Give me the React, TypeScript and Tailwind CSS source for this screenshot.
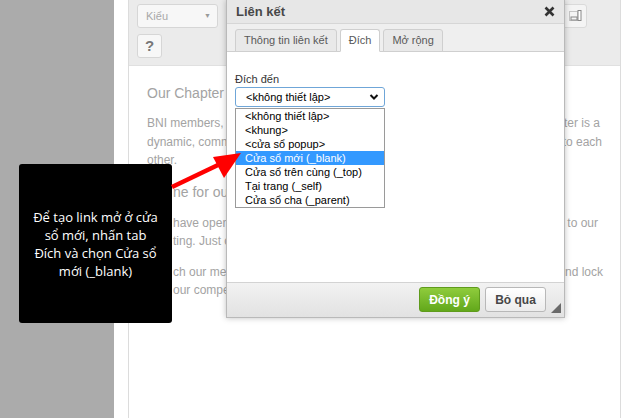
import { useState } from 'react'

const options = [
    '<không thiết lập>',
    '<khung>',
    '<cửa sổ popup>',
    'Cửa sổ mới (_blank)',
    'Cửa sổ trên cùng (_top)',
    'Tại trang (_self)',
    'Cửa sổ cha (_parent)',
]

// page text: only the bits that peek out around the dialog and the callout
const Line = ({ left, right = '', pr = 'pr-[20px]', indent = false }: { left: string; right?: string; pr?: string; indent?: boolean }) => (
    <div className={`flex justify-between whitespace-nowrap ${pr}`}>
        <span className={indent ? 'ml-[26px]' : ''}>{left}</span>
        <span>{right}</span>
    </div>
)

const App = () => {
    const [active] = useState(3)

    return (
        <div className="relative w-[627px] h-[418px] overflow-hidden bg-white font-['Liberation_Sans',Arial,sans-serif]">
            <div className="flex h-full">
                {/* grey margin */}
                <div className="w-[114px] bg-[#ababab]" />
                <div className="w-[14px]" />

                {/* editor */}
                <div className="w-[493px] h-full border-x border-[#dcdcdc] flex flex-col">
                    <div className="h-[66px] bg-[#ebebeb] border-b border-[#e0e0e0] flex justify-between pl-[8px] pr-[33px] pt-[4px]">
                        <div className="flex flex-col gap-[6px]">
                            <div className="w-[81px] h-[24px] rounded-[3px] border border-[#d6d6d6] bg-[#f7f7f7] flex items-center justify-between pl-[8px] pr-[6px]">
                                <span className="text-[11px] text-[#a8a8a8]">Kiểu</span>
                                <span className="text-[7px] text-[#9a9a9a]">▼</span>
                            </div>
                            <div className="w-[25px] h-[24px] rounded-[3px] border border-[#d6d6d6] bg-[#f7f7f7] flex items-center justify-center text-[15px] font-bold text-[#777]">
                                ?
                            </div>
                        </div>
                        <div className="w-[25px] h-[24px] rounded-[3px] border border-[#dadada] bg-[#f4f4f4] flex items-center justify-center">
                            <svg width="14" height="14" viewBox="0 0 14 14">
                                <rect x="1.5" y="2.5" width="8" height="9" fill="none" stroke="#999" strokeDasharray="1 1" />
                                <rect x="3" y="8" width="6" height="3" fill="none" stroke="#888" />
                                <rect x="10" y="1.5" width="3" height="10" fill="#fff" stroke="#888" />
                            </svg>
                        </div>
                    </div>

                    {/* page content */}
                    <div className="pl-[18px] pt-[17px] text-[#a3a3a3]">
                        <div className="text-[14px] leading-[20px]">Our Chapter</div>
                        <div className="mt-[11px] text-[12px] leading-[18.5px]">
                            <Line left="BNI members," right="ter is a" />
                            <Line left="dynamic, comm" right="to each" pr="pr-[18px]" />
                            <Line left="other." />
                        </div>
                        <div className="mt-[12px] text-[14px] leading-[20px]">
                            <Line left="ne for our" indent />
                        </div>
                        <div className="mt-[12px] text-[12px] leading-[18.5px]">
                            <Line left="have open" right="to our" pr="pr-[22px]" indent />
                            <Line left="ting. Just c" indent />
                        </div>
                        <div className="mt-[12px] text-[12px] leading-[18.5px]">
                            <Line left="ch our me" right="nd lock" pr="pr-[17px]" indent />
                            <Line left="our compe" indent />
                        </div>
                    </div>
                </div>
            </div>

            {/* dialog */}
            <div className="absolute left-[226px] top-0 w-[339px] h-[318px] border border-t-0 border-[#b9b9b9] bg-white flex flex-col shadow-[0_0_6px_rgba(0,0,0,0.25)]">
                <div className="h-[24px] bg-[#e7e7e7] border-b border-[#d6d6d6] flex items-center justify-between pl-[9px] pr-[9px]">
                    <span className="text-[13px] font-bold text-[#474747]">Liên kết</span>
                    <svg width="11" height="11" viewBox="0 0 11 11">
                        <path d="M1.5 1.5 L9.5 9.5 M9.5 1.5 L1.5 9.5" stroke="#333" strokeWidth="2.6" />
                    </svg>
                </div>
                <div className="h-[28px] bg-[#efefef] border-b border-[#cfcfcf] flex items-end gap-[3px] pl-[8px]">
                    {['Thông tin liên kết', 'Đích', 'Mở rộng'].map((t, i) => (
                        <div
                            key={t}
                            className={`h-[23px] -mb-px px-[8px] rounded-t-[3px] border border-[#cfcfcf] flex items-center text-[11px] text-[#595959] ${
                                i === 1 ? 'bg-white border-b-white' : 'bg-[#e9e9e9]'
                            }`}
                        >
                            {t}
                        </div>
                    ))}
                </div>

                <div className="flex-1 pl-[8px] pt-[20px]">
                    <div className="text-[11px] leading-[14px] text-[#333]">Đích đến</div>
                    <div className="mt-px w-[150px] h-[20px] rounded-[3px] border border-[#6fa6d8] flex items-center justify-between pl-[10px] pr-[5px] text-[11px] text-black">
                        <span>&lt;không thiết lập&gt;</span>
                        <svg width="10" height="8" viewBox="0 0 10 8">
                            <path d="M1.5 2 L5 5.5 L8.5 2" fill="none" stroke="#111" strokeWidth="2" />
                        </svg>
                    </div>
                    <div className="mt-px w-[150px] border border-[#9a9a9a] bg-white">
                        {options.map((o, i) => (
                            <div
                                key={o}
                                className={`h-[14px] leading-[14px] pl-[9px] text-[11px] whitespace-nowrap ${
                                    i === active ? 'bg-[#3399ff] text-white' : 'text-black'
                                }`}
                            >
                                {o}
                            </div>
                        ))}
                    </div>
                </div>

                <div className="h-[35px] border-t border-[#d3d3d3] bg-gradient-to-b from-[#f2f2f2] to-[#e2e2e2] flex items-start justify-end pt-[4px] pr-[18px] gap-[5px] relative">
                    <div className="w-[61px] h-[25px] rounded-[3px] border border-[#5f9b1c] bg-gradient-to-b from-[#8fcc3c] to-[#62a81a] flex items-center justify-center text-[12px] font-bold text-white">
                        Đồng ý
                    </div>
                    <div className="w-[61px] h-[25px] rounded-[3px] border border-[#b8b8b8] bg-gradient-to-b from-white to-[#ececec] flex items-center justify-center text-[12px] font-bold text-[#474747]">
                        Bỏ qua
                    </div>
                    <svg className="absolute right-[3px] bottom-[4px]" width="10" height="10" viewBox="0 0 10 10">
                        <path d="M10 0 L10 10 L0 10 Z" fill="#6a6a6a" />
                    </svg>
                </div>
            </div>

            {/* callout */}
            <div className="absolute left-[19px] top-[164px] w-[153px] h-[159px] rounded-[3px] bg-black flex items-center justify-center text-center text-white text-[13px] leading-[18px] font-['Open_Sans',sans-serif]">
                <p>
                    Để tạo link mở ở cửa
                    <br />
                    sổ mới, nhấn tab
                    <br />
                    Đích và chọn Cửa sổ
                    <br />
                    mới (_blank)
                </p>
            </div>

            {/* red arrow */}
            <svg className="absolute left-0 top-0" width="627" height="418" viewBox="0 0 627 418">
                <path d="M172 187 L218 165" stroke="#ff0000" strokeWidth="4.5" />
                <path d="M241 153 L213 157 L224 178 Z" fill="#ff0000" />
            </svg>
        </div>
    )
}

export default App
